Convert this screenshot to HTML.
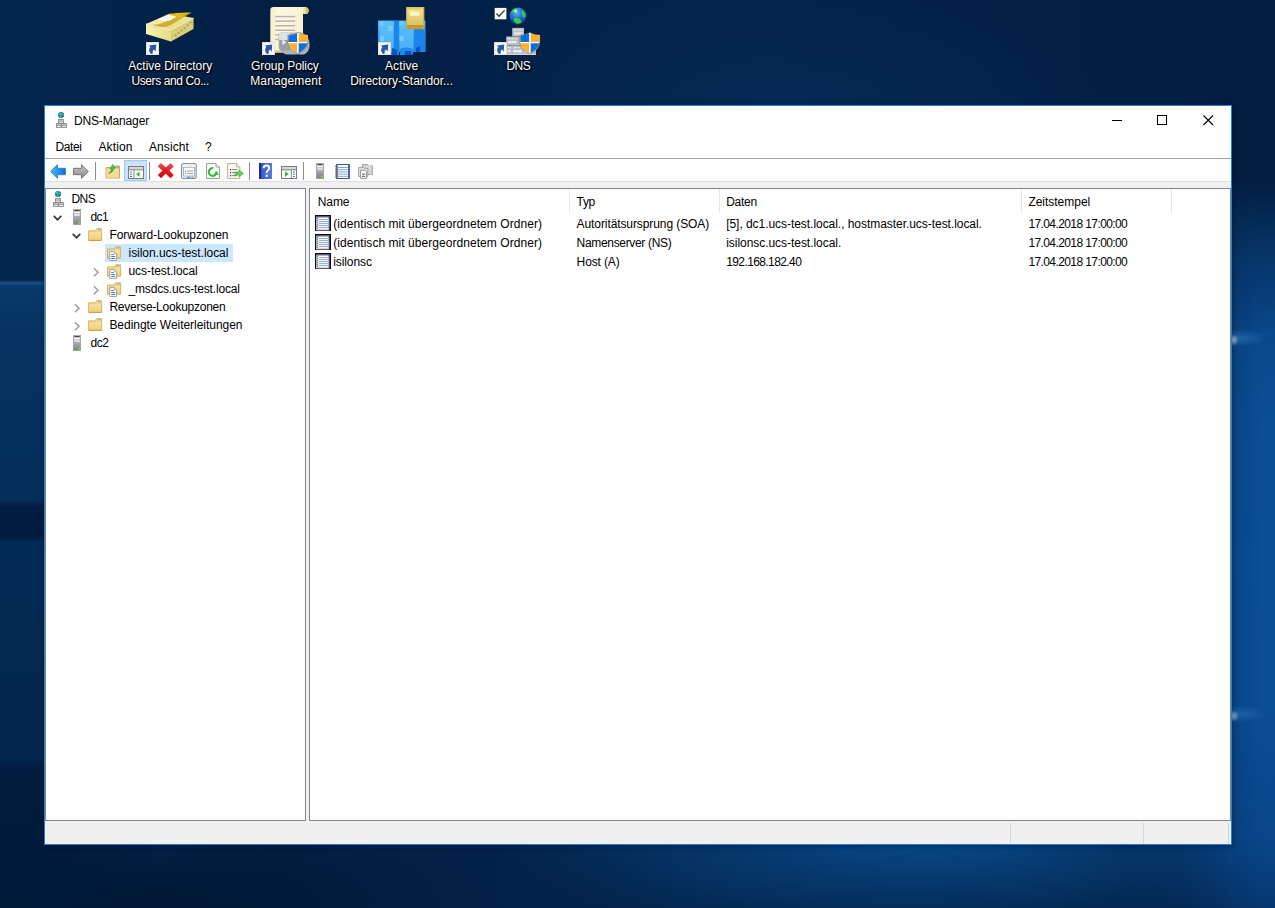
<!DOCTYPE html>
<html><head><meta charset="utf-8"><title>DNS-Manager</title>
<style>
html,body{margin:0;padding:0}
body{width:1275px;height:908px;overflow:hidden;position:relative;font-family:"Liberation Sans", sans-serif;font-size:12px;background:#021a3c}
.t{position:absolute;white-space:pre;line-height:14px;height:14px}
.i{position:absolute;line-height:0}
.i svg{display:block;overflow:visible}
.abs{position:absolute}
.dt{position:absolute;white-space:pre;line-height:14px;height:14px;color:#fff;font-size:12px;text-shadow:0 1px 2px rgba(0,0,0,.9),1px 1px 1px rgba(0,0,0,.8),0 0 3px rgba(0,0,0,.6)}
#bg{position:absolute;left:0;top:0;width:1275px;height:908px;
 background:
  radial-gradient(ellipse 440px 105px at 930px 838px, rgba(9,76,142,.95) 0%, rgba(9,76,142,.5) 45%, rgba(9,76,142,0) 100%),
  radial-gradient(ellipse 300px 120px at 800px 110px, rgba(6,48,96,.55), rgba(6,48,96,0) 100%),
  radial-gradient(ellipse 380px 90px at 120px 908px, rgba(1,20,48,.8), rgba(1,20,48,0) 100%),
  linear-gradient(90deg,#03264e 0%,#021f43 22%,#03234a 55%,#021d40 100%)}
#rs{position:absolute;left:1120px;top:0;width:155px;height:908px;
 background:
  radial-gradient(circle 6px at 113px 340px, rgba(200,230,255,.95), rgba(160,210,255,0) 100%),
  radial-gradient(ellipse 30px 9px at 116px 338px, rgba(70,150,235,.45), rgba(70,150,235,0) 100%),
  radial-gradient(circle 6px at 113px 716px, rgba(190,225,255,.85), rgba(160,210,255,0) 100%),
  radial-gradient(ellipse 30px 9px at 116px 714px, rgba(70,150,235,.4), rgba(70,150,235,0) 100%),
  linear-gradient(180deg, rgba(4,36,78,0) 0px, rgba(4,38,80,.0) 180px, #06305f 235px, #083d78 290px, #0a4a8c 340px, #0a4e93 420px, #0a4f98 560px, #0a4e96 700px, #0a4a90 770px, #094486 850px, #07376f 908px);
 -webkit-mask-image:linear-gradient(90deg, rgba(0,0,0,0) 0%, rgba(0,0,0,.3) 40%, rgba(0,0,0,.8) 72%, #000 90%);
 mask-image:linear-gradient(90deg, rgba(0,0,0,0) 0%, rgba(0,0,0,.3) 40%, rgba(0,0,0,.8) 72%, #000 90%)}
#ls{position:absolute;left:0;top:0;width:150px;height:908px;
 background:linear-gradient(180deg, rgba(3,37,76,0) 0px, rgba(3,37,76,0) 240px, #03254c 270px, #03264e 280px, #1d5288 283px, #07396a 286px, #053361 330px, #04305c 440px, #042e5a 500px, #021d42 507px, #021c40 536px, #032b57 543px, #032950 650px, #02244b 760px, #011c3e 770px, #011a3a 908px);
 -webkit-mask-image:linear-gradient(90deg,#000 0px,#000 44px,rgba(0,0,0,0) 150px);mask-image:linear-gradient(90deg,#000 0px,#000 44px,rgba(0,0,0,0) 150px)}
#win{position:absolute;left:44px;top:105px;width:1186px;height:738px;border:1px solid #1883d7;background:#fff;box-shadow:0 1px 5px rgba(0,8,24,.45)}
</style></head><body>
<div id="bg"></div><div id="rs"></div><div id="ls"></div>

<div class="i" style="left:146px;top:7px"><svg width="48" height="48" viewBox="0 0 48 48">
<defs><linearGradient id="da1" x1="0" y1="0" x2="1" y2="0"><stop offset="0" stop-color="#f7f1b4"/><stop offset="1" stop-color="#e7dc88"/></linearGradient>
<linearGradient id="da2" x1="0" y1="0" x2="1" y2="1"><stop offset="0" stop-color="#fdfae0"/><stop offset="0.5" stop-color="#f0e592"/><stop offset="1" stop-color="#e0d27a"/></linearGradient></defs>
<path d="M0 17L25 23V34.5L0 27Z" fill="url(#da1)"/>
<path d="M25 23L47.5 11V22L25 34.5Z" fill="#d9cd78"/>
<path d="M0 17L24 6.5L47.5 11L25 23Z" fill="url(#da2)"/>
<path d="M3 17.5Q14 19 22 13Q30 7 45 6Q36 11 30 15Q22 21 10 20.5Z" fill="#c8a826" opacity="0.9"/>
<path d="M12 12.5L22 7.5Q28 8 32 6.5L41 6.2Q30 9 24 13.5Q18 15.5 12 12.5Z" fill="#fffdf0"/>
<path d="M21 7.5Q32 5 46 5.6Q37 8 33 11Q28 8 21 7.5Z" fill="#e9b818"/>
<path d="M0 17L25 23L47.5 11" fill="none" stroke="#fbf7cc" stroke-width="1"/>
<g fill="#a39a58"><circle cx="29.5" cy="28.3" r="1"/><circle cx="32.5" cy="26" r="1"/><circle cx="35.5" cy="23.6" r="1"/><circle cx="38.5" cy="21" r="1"/><circle cx="41.5" cy="18.2" r="1"/><circle cx="44.5" cy="15.4" r="1"/></g>
<g transform="translate(0,35)"><rect x="0" y="0" width="13" height="13" fill="#f7f7f7"/><rect x="0.3" y="0.3" width="12.4" height="12.4" fill="none" stroke="#d0d0d0" stroke-width="0.6"/>
<path d="M5 12Q1.6 8.4 4.3 5.2L3 3.5L10.2 2.4L9.7 9.4L7.9 7.5Q6 8.8 6.8 11.4Z" fill="#2a58a4"/></g></svg></div>
<div class="i" style="left:262px;top:7px"><svg width="48" height="48" viewBox="0 0 48 48">
<defs><linearGradient id="dg1" x1="0" y1="0" x2="1" y2="0"><stop offset="0" stop-color="#f7ecc4"/><stop offset="0.2" stop-color="#fdf7de"/><stop offset="1" stop-color="#f9f0d0"/></linearGradient></defs>
<path d="M8.3 3Q8.3 0 11.5 0H43Q46.6 0 46.6 3.5Q46.6 7 43.5 7H41V45.5H11.5Q8.3 45.5 8.3 42Z" fill="url(#dg1)"/>
<path d="M41 7H43.5Q46.6 7 46.6 3.5Q46.6 0.4 43.6 0.2Q41 1.6 41 7Z" fill="#d9c06a"/>
<path d="M41 7V3.5Q41 1 43.2 0.8Q44.6 2.6 43.5 7Z" fill="#efe0a0"/>
<g fill="#bdb0b4"><rect x="13.2" y="8.8" width="20" height="1.5"/><rect x="13.2" y="13.4" width="20" height="1.5"/><rect x="13.2" y="18" width="20" height="1.5"/><rect x="13.2" y="22.5" width="20" height="1.5"/><rect x="13.2" y="27.1" width="6" height="1.5"/><rect x="13.2" y="31.7" width="4" height="1.5"/></g>
<path d="M10 45.5H41V43.5H10Q9 44.6 10 45.5Z" fill="#e3c768"/>
<path d="M16.5 27.5Q16.5 25.5 19 25.5H40Q47.6 29 47.6 38Q47.6 45 42 47.5H24Q16.5 44 16.5 40Z" fill="#aeb4b8"/>
<path d="M17 27.5Q17 26 19 26H28V33H17Z" fill="#dde2e6"/><path d="M17.5 33H28V43.5H20Q17.5 42 17.5 40Z" fill="#9aa1a6"/>
<path d="M20.5 32.5L24 35.2L20.5 38Z" fill="#eef0f2"/>
<g transform="translate(25.6,25.2)"><path d="M10.3 0.3Q14.3 2.8 20.3 2.8V9.6Q20.3 17.4 10.3 21.3Q0.3 17.4 0.3 9.6V2.8Q6.3 2.8 10.3 0.3Z" fill="#fff" stroke="#5e4a2c" stroke-width="0.5"/>
<path d="M9.5 0.95Q6.3 3 0.75 3.2V9.7H9.5Z" fill="#0f6fd6"/><path d="M11.1 0.95Q14.3 3 19.85 3.2V9.7H11.1Z" fill="#f9b02c"/>
<path d="M0.75 11.1H9.5V20.5Q1.7 17 0.75 11.1Z" fill="#f9b02c"/><path d="M19.85 11.1H11.1V20.5Q18.9 17 19.85 11.1Z" fill="#0f6fd6"/></g><g transform="translate(0,35)"><rect x="0" y="0" width="13" height="13" fill="#f7f7f7"/><rect x="0.3" y="0.3" width="12.4" height="12.4" fill="none" stroke="#d0d0d0" stroke-width="0.6"/>
<path d="M5 12Q1.6 8.4 4.3 5.2L3 3.5L10.2 2.4L9.7 9.4L7.9 7.5Q6 8.8 6.8 11.4Z" fill="#2a58a4"/></g></svg></div>
<div class="i" style="left:378px;top:7px"><svg width="48" height="48" viewBox="0 0 48 48">
<defs><linearGradient id="ds1" x1="0" y1="0" x2="0" y2="1"><stop offset="0" stop-color="#45b4f6"/><stop offset="0.6" stop-color="#2a9cf0"/><stop offset="1" stop-color="#1486ea"/></linearGradient>
<linearGradient id="ds2" x1="0" y1="0" x2="0" y2="1"><stop offset="0" stop-color="#d9bd56"/><stop offset="0.15" stop-color="#f1df92"/><stop offset="0.8" stop-color="#dcc15c"/><stop offset="0.82" stop-color="#b7962a"/><stop offset="1" stop-color="#c5a232"/></linearGradient></defs>
<rect x="0" y="13.5" width="18.6" height="34.5" fill="url(#ds1)"/><rect x="20.2" y="13.5" width="27.2" height="31.5" fill="url(#ds1)"/>
<rect x="16" y="13.5" width="5" height="34.5" fill="#1886ea"/>
<rect x="36" y="22" width="11.4" height="23" fill="#1a84ea"/>
<g fill="#9fe2ff" opacity="0.75"><rect x="1.5" y="14.5" width="4" height="4"/><rect x="21.5" y="14.5" width="4" height="4"/><rect x="2" y="29" width="4" height="5"/><rect x="21.5" y="29" width="4" height="5"/><rect x="10" y="19" width="5" height="5"/></g>
<g fill="#6cc8fb" opacity="0.6"><rect x="1.5" y="14.5" width="14" height="30"/><rect x="21.5" y="14.5" width="14" height="30"/></g>
<path d="M22 48V42Q28 39 35 42V48Z" fill="#1d8cf0"/><path d="M14 48V41L19 43V48Z" fill="#0b50c8"/><path d="M27 48V44H33V46L35 48Z" fill="#0b50c8"/><path d="M38 45V41L42 39V45Z" fill="#0b50c8"/>
<rect x="28.2" y="0" width="18" height="22.2" fill="url(#ds2)"/><rect x="28.2" y="0" width="1" height="22.2" fill="#c9ac46"/><rect x="45.2" y="0" width="1" height="22.2" fill="#c9ac46"/>
<rect x="32" y="4.6" width="9.4" height="4.2" fill="#fdf6c8"/>
<g transform="translate(0,35)"><rect x="0" y="0" width="13" height="13" fill="#f7f7f7"/><rect x="0.3" y="0.3" width="12.4" height="12.4" fill="none" stroke="#d0d0d0" stroke-width="0.6"/>
<path d="M5 12Q1.6 8.4 4.3 5.2L3 3.5L10.2 2.4L9.7 9.4L7.9 7.5Q6 8.8 6.8 11.4Z" fill="#2a58a4"/></g></svg></div>
<div class="i" style="left:494px;top:7px"><svg width="48" height="48" viewBox="0 0 48 48">
<rect x="0.7" y="0.9" width="11.7" height="11.4" fill="#fff"/><path d="M2.4 6.6L5 9.2L10.6 3.4" fill="none" stroke="#333" stroke-width="1.3"/>
<defs><radialGradient id="dd1" cx="0.42" cy="0.3" r="0.75"><stop offset="0" stop-color="#5ab4ff"/><stop offset="0.45" stop-color="#2a6fe0"/><stop offset="1" stop-color="#0a2f9c"/></radialGradient></defs>
<circle cx="24" cy="8.9" r="8.5" fill="url(#dd1)"/>
<path d="M16.8 6Q18 2 22.5 1.6Q24.5 3 22.5 5Q20 6.4 16.8 6ZM28 3.2Q30.6 4.2 31.6 7Q31.8 10 30 11Q28 9.6 28 7ZM19.6 11.6Q22 10 25 11.6Q28 13.6 27.4 15.6Q24.6 17.6 21.6 16Q19.4 14 19.6 11.6Z" fill="#2fd433"/>
<circle cx="21.6" cy="3.8" r="1.6" fill="#d8ffd0" opacity="0.8"/>
<g fill="#b9bcc0"><rect x="18.2" y="20.9" width="11.8" height="8.6"/><rect x="12.2" y="29.5" width="24" height="9"/><rect x="12.2" y="38.5" width="29.8" height="9.5"/></g>
<rect x="0" y="47" width="42" height="1" fill="#d9d9d9"/>
<g fill="#e9ebed"><rect x="19.5" y="22.4" width="3" height="1.3"/><rect x="23.5" y="22.4" width="2" height="1.3"/><rect x="26.5" y="22.4" width="2" height="1.3"/><rect x="20" y="25.4" width="8.6" height="2.2"/>
<rect x="13.6" y="31" width="3" height="1.3"/><rect x="17.6" y="31" width="2" height="1.3"/><rect x="20.6" y="31" width="2" height="1.3"/><rect x="14" y="34" width="8.6" height="2.2"/>
<rect x="13.6" y="40" width="3" height="1.3"/><rect x="19.6" y="40" width="3" height="1.3"/><rect x="23.6" y="40" width="2" height="1.3"/><rect x="13.6" y="43" width="3" height="2.4"/><rect x="19" y="43" width="9" height="2.4"/><rect x="31" y="43" width="5" height="2.4"/></g>
<g transform="translate(25.6,25.2)"><path d="M10.3 0.3Q14.3 2.8 20.3 2.8V9.6Q20.3 17.4 10.3 21.3Q0.3 17.4 0.3 9.6V2.8Q6.3 2.8 10.3 0.3Z" fill="#fff" stroke="#5e4a2c" stroke-width="0.5"/>
<path d="M9.5 0.95Q6.3 3 0.75 3.2V9.7H9.5Z" fill="#0f6fd6"/><path d="M11.1 0.95Q14.3 3 19.85 3.2V9.7H11.1Z" fill="#f9b02c"/>
<path d="M0.75 11.1H9.5V20.5Q1.7 17 0.75 11.1Z" fill="#f9b02c"/><path d="M19.85 11.1H11.1V20.5Q18.9 17 19.85 11.1Z" fill="#0f6fd6"/></g><g transform="translate(0,35)"><rect x="0" y="0" width="13" height="13" fill="#f7f7f7"/><rect x="0.3" y="0.3" width="12.4" height="12.4" fill="none" stroke="#d0d0d0" stroke-width="0.6"/>
<path d="M5 12Q1.6 8.4 4.3 5.2L3 3.5L10.2 2.4L9.7 9.4L7.9 7.5Q6 8.8 6.8 11.4Z" fill="#2a58a4"/></g></svg></div>
<span class="dt" style="left:128.3px;top:59px;letter-spacing:-0.002px">Active Directory</span>
<span class="dt" style="left:131.4px;top:74px;letter-spacing:-0.385px">Users and Co...</span>
<span class="dt" style="left:251px;top:59px;letter-spacing:-0.075px">Group Policy</span>
<span class="dt" style="left:250.2px;top:74px;letter-spacing:0.135px">Management</span>
<span class="dt" style="left:385px;top:59px;letter-spacing:0.119px">Active</span>
<span class="dt" style="left:350.2px;top:74px;letter-spacing:-0.029px">Directory-Standor...</span>
<span class="dt" style="left:506.5px;top:59px;letter-spacing:-0.600px">DNS</span>
<div id="win"></div>
<div class="abs" style="left:45px;top:158px;width:1186px;height:1px;background:#a0a0a0"></div>
<div class="abs" style="left:45px;top:181px;width:1186px;height:7px;background:#f0f0f0"></div>
<div class="abs" style="left:45px;top:181px;width:1186px;height:1px;background:#dfdfdf"></div>
<div class="abs" style="left:45px;top:188px;width:259px;height:631px;border:1px solid #828790;background:#fff"></div>
<div class="abs" style="left:306px;top:188px;width:3px;height:633px;background:#f0f0f0"></div>
<div class="abs" style="left:309px;top:188px;width:920px;height:631px;border:1px solid #828790;background:#fff"></div>
<div class="abs" style="left:45px;top:821px;width:1186px;height:23px;background:#f0f0f0"></div>
<div class="abs" style="left:1010px;top:823px;width:1px;height:21px;background:#d7d7d7"></div>
<div class="abs" style="left:1143px;top:823px;width:1px;height:21px;background:#d7d7d7"></div>
<div class="abs" style="left:1228px;top:823px;width:1px;height:21px;background:#d7d7d7"></div>
<div class="i" style="left:56px;top:112px"><svg width="11" height="16" viewBox="0 0 11 16">
<defs><radialGradient id="gg" cx="0.4" cy="0.35" r="0.75"><stop offset="0" stop-color="#4fa8ff"/><stop offset="0.5" stop-color="#2a62dc"/><stop offset="1" stop-color="#0c2c96"/></radialGradient></defs>
<circle cx="5" cy="3" r="3.05" fill="url(#gg)"/>
<path d="M2.2 2.4Q2.8 0.6 4.6 0.6Q5 2 3.8 3ZM6 1.4Q7.6 1.6 7.9 3.2Q7.2 4.4 6 3.4ZM3.4 4.2Q4.8 3.4 5.9 4.5Q5.6 6 4.4 6Q3.4 5.4 3.4 4.2Z" fill="#22e02a"/>
<rect x="2" y="7" width="5.9" height="4.4" fill="#909090"/><rect x="0" y="11" width="10.9" height="4.9" fill="#909090"/>
<g fill="#d4d4d4"><rect x="3" y="8" width="1.6" height="0.9"/><rect x="5.2" y="8" width="1.7" height="0.9"/><rect x="1" y="12.1" width="1.6" height="0.9"/><rect x="3.2" y="12.1" width="1.6" height="0.9"/><rect x="6.1" y="12.1" width="1.6" height="0.9"/><rect x="8.3" y="12.1" width="1.6" height="0.9"/></g>
<g fill="#fff"><rect x="3" y="9.6" width="3.9" height="1"/><rect x="1" y="13.8" width="3.8" height="1"/><rect x="6.1" y="13.8" width="3.8" height="1"/></g>
</svg></div>
<span class="t " style="left:74px;top:114.03px;font-size:12px;letter-spacing:-0.155px;color:#000;">DNS-Manager</span>
<div class="abs" style="left:1112px;top:120px;width:10px;height:1px;background:#000"></div>
<div class="abs" style="left:1157px;top:115px;width:8px;height:8px;border:1px solid #000"></div>
<div class="i" style="left:1203px;top:115px"><svg width="11" height="11" viewBox="0 0 11 11"><path d="M0.5 0.5L10 10M10 0.5L0.5 10" stroke="#000" stroke-width="1.1" fill="none"/></svg></div>
<span class="t " style="left:55.5px;top:140.03px;font-size:12px;letter-spacing:-0.423px;color:#000;">Datei</span>
<span class="t " style="left:98.4px;top:140.03px;font-size:12px;letter-spacing:0.157px;color:#000;">Aktion</span>
<span class="t " style="left:149px;top:140.03px;font-size:12px;letter-spacing:0.092px;color:#000;">Ansicht</span>
<span class="t " style="left:205px;top:140.03px;font-size:12px;letter-spacing:-0.600px;color:#000;">?</span>
<div class="abs" style="left:124px;top:160px;width:21px;height:19px;border:1px solid #98cdf5;background:#cce4f7"></div>
<div class="abs" style="left:95px;top:162px;width:1px;height:18px;background:#8d8d8d"></div>
<div class="abs" style="left:149px;top:162px;width:1px;height:18px;background:#8d8d8d"></div>
<div class="abs" style="left:249px;top:162px;width:1px;height:18px;background:#8d8d8d"></div>
<div class="abs" style="left:303px;top:162px;width:1px;height:18px;background:#8d8d8d"></div>
<div class="i" style="left:50px;top:164px"><svg width="16" height="15" viewBox="0 0 16 15">
<defs><linearGradient id="gb" x1="0" y1="0" x2="1" y2="0"><stop offset="0" stop-color="#55b8f7"/><stop offset="1" stop-color="#0a6fd2"/></linearGradient></defs>
<path d="M0.6 7.5L7.5 0.7V4.3H15.4V10.7H7.5V14.3Z" fill="url(#gb)" stroke="#2a7fd0" stroke-width="0.9" stroke-linejoin="round"/></svg></div>
<div class="i" style="left:73px;top:164px"><svg width="16" height="15" viewBox="0 0 16 15">
<defs><linearGradient id="gf" x1="0" y1="0" x2="0" y2="1"><stop offset="0" stop-color="#c9c9c9"/><stop offset="1" stop-color="#8a8a8a"/></linearGradient></defs>
<path d="M15.4 7.5L8.5 0.7V4.3H0.6V10.7H8.5V14.3Z" fill="url(#gf)" stroke="#6b6b6b" stroke-width="0.9" stroke-linejoin="round"/></svg></div>
<div class="i" style="left:104.6px;top:163.4px"><svg width="16" height="16" viewBox="0 0 16 16">
<path d="M1 4.5H8L9.5 3H14.5V15H1Z" fill="#efcf7c" stroke="#c9a24a" stroke-width="0.9"/>
<rect x="1.5" y="6" width="12.5" height="8.5" fill="#f6dc98"/>
<path d="M3.5 10.5Q5.5 9.5 6.5 6.5L5 6L7.5 1.5L10.5 5L8.8 5.4Q8 10 3.5 10.5Z" fill="#3fbf3f" stroke="#2c9a2c" stroke-width="0.5"/>
<rect x="10.5" y="3.6" width="3" height="1" fill="#6a9fe0"/></svg></div>
<div class="i" style="left:128px;top:164px"><svg width="16" height="16" viewBox="0 0 16 16">
<rect x="0.5" y="2.5" width="15" height="12" fill="#fff" stroke="#7a7a7a"/>
<rect x="1" y="3" width="14" height="2.2" fill="#d9d9d9"/><rect x="0.5" y="5.3" width="15" height="1" fill="#7a7a7a"/>
<rect x="5.5" y="6" width="1" height="8.5" fill="#8a8a8a"/>
<rect x="2" y="7.6" width="2" height="1" fill="#3b78d8"/><rect x="2" y="9.8" width="2" height="1" fill="#3b78d8"/><rect x="2" y="12" width="2" height="1" fill="#3b78d8"/>
<path d="M11.5 7.5V13L8 10.2Z" fill="#3fb83f"/></svg></div>
<div class="i" style="left:157.5px;top:163px"><svg width="16" height="16" viewBox="0 0 16 16">
<defs><linearGradient id="gd" x1="0" y1="0" x2="0" y2="1"><stop offset="0" stop-color="#f0545a"/><stop offset="0.5" stop-color="#e81820"/><stop offset="1" stop-color="#c80f16"/></linearGradient></defs>
<path d="M3 0.4L7.8 4.8L12.6 0.4L15.5 3.3L11 7.6L15.5 12L12.6 14.9L7.8 10.5L3 14.9L0.1 12L4.6 7.6L0.1 3.3Z" fill="url(#gd)" stroke="#c4141c" stroke-width="0.5" stroke-linejoin="round"/></svg></div>
<div class="i" style="left:181px;top:163px"><svg width="16" height="16" viewBox="0 0 16 16">
<rect x="0.6" y="0.6" width="14.6" height="14.8" rx="1.2" fill="#f4f6f8" stroke="#7d8590"/>
<rect x="2.5" y="4.5" width="11" height="8.5" fill="#fff" stroke="#9aa3ad" stroke-width="0.8"/>
<rect x="5" y="3.5" width="3" height="1.5" fill="#c9ced4"/><rect x="9" y="3.5" width="3" height="1.5" fill="#c9ced4"/>
<rect x="4" y="7.5" width="1.2" height="1.2" fill="#2fa4f0"/><rect x="6.2" y="7.6" width="6" height="1" fill="#8f98a3"/>
<rect x="4" y="10" width="1.2" height="1.2" fill="#8f98a3"/><rect x="6.2" y="10.1" width="6" height="1" fill="#8f98a3"/>
<rect x="6" y="13.6" width="3.4" height="1.3" fill="#18b4f0"/><rect x="10.3" y="13.6" width="3.2" height="1.3" fill="#a9b0b8"/></svg></div>
<div class="i" style="left:205px;top:163px"><svg width="16" height="16" viewBox="0 0 16 16">
<path d="M1.6 0.6H11L14.4 4V15.4H1.6Z" fill="#fff" stroke="#8a8a8a" stroke-width="0.9"/><path d="M11 0.6V4H14.4" fill="#eee" stroke="#8a8a8a" stroke-width="0.8"/>
<path d="M11.6 9.2A3.9 3.9 0 1 1 8.4 5.1" fill="none" stroke="#3cb63c" stroke-width="2.1"/>
<path d="M8.8 11.8L13.6 11.9L11.3 7.4Z" fill="#3cb63c"/></svg></div>
<div class="i" style="left:226.8px;top:163px"><svg width="17" height="16" viewBox="0 0 17 16">
<path d="M0.6 0.6H9.5L12.9 4V15.4H0.6Z" fill="#fdf8e4" stroke="#a8a8a8" stroke-width="0.9"/><path d="M9.5 0.6V4H12.9" fill="#eee" stroke="#a8a8a8" stroke-width="0.8"/>
<rect x="3" y="6" width="1.2" height="1.2" fill="#333"/><rect x="5.2" y="6.1" width="5" height="1" fill="#6a74c8"/>
<rect x="3" y="9" width="1.2" height="1.2" fill="#333"/><rect x="5.2" y="9.1" width="4" height="1" fill="#6a74c8"/>
<rect x="3" y="12" width="1.2" height="1.2" fill="#333"/><rect x="5.2" y="12.1" width="5" height="1" fill="#6a74c8"/>
<path d="M8.2 9H12V7L16.4 10.4L12 13.8V11.8H8.2Z" fill="#5fcf4a" stroke="#38a828" stroke-width="0.6"/></svg></div>
<div class="i" style="left:259px;top:163px"><svg width="13" height="16" viewBox="0 0 13 16">
<defs><linearGradient id="gh" x1="0" y1="0" x2="1" y2="0"><stop offset="0" stop-color="#1f3fa8"/><stop offset="0.25" stop-color="#3b62d8"/><stop offset="1" stop-color="#5578e0"/></linearGradient></defs>
<rect x="0" y="0" width="13" height="16" fill="url(#gh)"/><rect x="0" y="0" width="2.2" height="16" fill="#182f86"/>
<path d="M4.6 5.2Q4.6 2.4 7.4 2.4Q10.2 2.4 10.2 4.9Q10.2 6.4 8.8 7.5Q7.7 8.4 7.7 10" fill="none" stroke="#fff" stroke-width="2"/><rect x="6.6" y="11.6" width="2.2" height="2.2" fill="#fff"/></svg></div>
<div class="i" style="left:281px;top:163px"><svg width="16" height="16" viewBox="0 0 16 16">
<rect x="0.5" y="3.5" width="15" height="12" fill="#fff" stroke="#7a7a7a"/>
<rect x="1" y="4" width="14" height="2.2" fill="#d9d9d9"/><rect x="0.5" y="6.3" width="15" height="1" fill="#7a7a7a"/>
<rect x="9.8" y="7" width="1" height="8.5" fill="#8a8a8a"/>
<rect x="12" y="8.6" width="2" height="1" fill="#3b78d8"/><rect x="12" y="10.8" width="2" height="1" fill="#3b78d8"/><rect x="12" y="13" width="2" height="1" fill="#3b78d8"/>
<path d="M4 8.3V14L7.8 11.1Z" fill="#3fb83f"/></svg></div>
<div class="i" style="left:316px;top:163px"><svg width="8" height="16" viewBox="0 0 8 16">
<defs><linearGradient id="gs" x1="0" y1="0" x2="0" y2="1"><stop offset="0" stop-color="#c6cace"/><stop offset="0.45" stop-color="#a9aeb3"/><stop offset="1" stop-color="#7a8086"/></linearGradient></defs>
<rect x="0.3" y="0.3" width="7.4" height="15.3" fill="url(#gs)" stroke="#8e9399" stroke-width="0.6"/>
<rect x="1.4" y="1.1" width="5.2" height="1" fill="#33373c"/><rect x="1.1" y="2.7" width="5.8" height="1.6" fill="#f6f7f8"/><rect x="1.1" y="5.2" width="5.8" height="1.6" fill="#e6e8ea"/>
<rect x="5.2" y="12.8" width="1.9" height="1.9" fill="#86e21e"/></svg></div>
<div class="i" style="left:335.4px;top:164px"><svg width="15" height="15" viewBox="0 0 15 15">
<rect x="1.8" y="0.5" width="12.4" height="14" fill="#fff" stroke="#3f4f9a" stroke-width="1"/>
<rect x="13" y="1" width="1.6" height="13" fill="#4458a8"/>
<g fill="#79a9dc"><rect x="3" y="3" width="9.6" height="1"/><rect x="3" y="5.2" width="9.6" height="1"/><rect x="3" y="7.4" width="9.6" height="1"/><rect x="3" y="9.6" width="9.6" height="1"/><rect x="3" y="11.8" width="9.6" height="1"/></g>
<g fill="none" stroke="#5a5a5a" stroke-width="0.8"><circle cx="1.6" cy="2.2" r="1"/><circle cx="1.6" cy="4.4" r="1"/><circle cx="1.6" cy="6.6" r="1"/><circle cx="1.6" cy="8.8" r="1"/><circle cx="1.6" cy="11" r="1"/><circle cx="1.6" cy="13.2" r="1"/></g></svg></div>
<div class="i" style="left:358px;top:164px"><svg width="15" height="15" viewBox="0 0 15 15">
<path d="M4.5 0.6H10L11 1.6H14.4V10.5H4.5Z" fill="#d7d7d7" stroke="#9b9b9b" stroke-width="0.9"/><rect x="11" y="1.2" width="2.4" height="0.9" fill="#f3f3f3"/>
<path d="M0.6 3.4H5.6L6.6 4.4H9.8V12.5H0.6Z" fill="#e4e4e4" stroke="#9b9b9b" stroke-width="0.9"/>
<path d="M2.6 6.2H6.8L8.6 8V14.4H2.6Z" fill="#fff" stroke="#8a8a8a" stroke-width="0.9"/>
<rect x="4" y="9.6" width="3.2" height="1" fill="#555"/><rect x="4" y="11.8" width="3.2" height="1" fill="#555"/></svg></div>
<div class="abs" style="left:105px;top:244px;width:128px;height:18px;background:#cce8ff"></div>
<div class="i" style="left:53px;top:191px"><svg width="11" height="16" viewBox="0 0 11 16">
<circle cx="5" cy="3" r="3.05" fill="url(#gg)"/>
<path d="M2.2 2.4Q2.8 0.6 4.6 0.6Q5 2 3.8 3ZM6 1.4Q7.6 1.6 7.9 3.2Q7.2 4.4 6 3.4ZM3.4 4.2Q4.8 3.4 5.9 4.5Q5.6 6 4.4 6Q3.4 5.4 3.4 4.2Z" fill="#22e02a"/>
<rect x="2" y="7" width="5.9" height="4.4" fill="#909090"/><rect x="0" y="11" width="10.9" height="4.9" fill="#909090"/>
<g fill="#d4d4d4"><rect x="3" y="8" width="1.6" height="0.9"/><rect x="5.2" y="8" width="1.7" height="0.9"/><rect x="1" y="12.1" width="1.6" height="0.9"/><rect x="3.2" y="12.1" width="1.6" height="0.9"/><rect x="6.1" y="12.1" width="1.6" height="0.9"/><rect x="8.3" y="12.1" width="1.6" height="0.9"/></g>
<g fill="#fff"><rect x="3" y="9.6" width="3.9" height="1"/><rect x="1" y="13.8" width="3.8" height="1"/><rect x="6.1" y="13.8" width="3.8" height="1"/></g>
</svg></div>
<span class="t " style="left:71.5px;top:192.03px;font-size:12px;letter-spacing:-0.600px;color:#000;">DNS</span>
<div class="i" style="left:53px;top:214.7px"><svg width="9" height="6" viewBox="0 0 9 6"><path d="M0.7 0.8L4.5 4.7L8.3 0.8" stroke="#3c3c3c" stroke-width="1.7" fill="none"/></svg></div>
<div class="i" style="left:73px;top:209px"><svg width="8" height="16" viewBox="0 0 8 16">
<rect x="0.3" y="0.3" width="7.4" height="15.3" fill="url(#gs)" stroke="#8e9399" stroke-width="0.6"/>
<rect x="1.4" y="1.1" width="5.2" height="1" fill="#33373c"/><rect x="1.1" y="2.7" width="5.8" height="1.6" fill="#f6f7f8"/><rect x="1.1" y="5.2" width="5.8" height="1.6" fill="#e6e8ea"/>
<rect x="5.2" y="12.8" width="1.9" height="1.9" fill="#86e21e"/></svg></div>
<span class="t " style="left:90.5px;top:210.03px;font-size:12px;letter-spacing:-0.600px;color:#000;">dc1</span>
<div class="i" style="left:72px;top:232.7px"><svg width="9" height="6" viewBox="0 0 9 6"><path d="M0.7 0.8L4.5 4.7L8.3 0.8" stroke="#3c3c3c" stroke-width="1.7" fill="none"/></svg></div>
<div class="i" style="left:88px;top:228px"><svg width="15" height="13" viewBox="0 0 15 13">
<defs><linearGradient id="gfo" x1="0" y1="0" x2="0" y2="1"><stop offset="0" stop-color="#fbe7ac"/><stop offset="1" stop-color="#f1cf79"/></linearGradient></defs>
<path d="M0.5 2.8H7.2L8.6 0.6H13.6V12.4H0.5Z" fill="url(#gfo)" stroke="#d9b45c" stroke-width="0.9" stroke-linejoin="round"/>
<path d="M0.9 3.7H7.6L8.8 2.9H13.2" fill="none" stroke="#e3c06a" stroke-width="0.7"/><rect x="9.6" y="1.2" width="3" height="1" fill="#6fa6e6"/><path d="M0.9 12.4H13.6" stroke="#c39a40" stroke-width="0.9"/></svg></div>
<span class="t " style="left:109.4px;top:228.03px;font-size:12px;letter-spacing:-0.057px;color:#000;">Forward-Lookupzonen</span>
<div class="i" style="left:107px;top:246px"><svg width="15" height="15" viewBox="0 0 15 15">
<defs><linearGradient id="gz" x1="0" y1="0" x2="0" y2="1"><stop offset="0" stop-color="#fbe7ac"/><stop offset="1" stop-color="#f1cf79"/></linearGradient></defs>
<path d="M0.5 3H7.2L8.6 0.8H13.6V12.2H0.5Z" fill="url(#gz)" stroke="#d3ac52" stroke-width="0.9" stroke-linejoin="round"/>
<path d="M0.9 3.9H7.6L8.8 3.1H13.2" fill="none" stroke="#e3c06a" stroke-width="0.7"/><rect x="9.6" y="1.4" width="3" height="1" fill="#6fa6e6"/>
<path d="M2.8 5.6H7.4L9.6 7.8V14.5H2.8Z" fill="#fff" stroke="#9a9a9a" stroke-width="0.9"/><path d="M7.4 5.6V7.8H9.6" fill="#e6e6e6" stroke="#9a9a9a" stroke-width="0.7"/>
<rect x="4.2" y="8" width="2.6" height="1" fill="#3f7fd6"/><rect x="4.2" y="10" width="4" height="1" fill="#3f7fd6"/><rect x="4.2" y="12" width="4" height="1" fill="#3f7fd6"/></svg></div>
<span class="t " style="left:128.5px;top:246.03px;font-size:12px;letter-spacing:-0.039px;color:#000;">isilon.ucs-test.local</span>
<div class="i" style="left:93px;top:267px"><svg width="6" height="10" viewBox="0 0 6 10"><path d="M0.9 1.2L5 5.2L0.9 9.2" stroke="#a0a0a0" stroke-width="1.6" fill="none"/></svg></div>
<div class="i" style="left:107px;top:264px"><svg width="15" height="15" viewBox="0 0 15 15">
<path d="M0.5 3H7.2L8.6 0.8H13.6V12.2H0.5Z" fill="url(#gz)" stroke="#d3ac52" stroke-width="0.9" stroke-linejoin="round"/>
<path d="M0.9 3.9H7.6L8.8 3.1H13.2" fill="none" stroke="#e3c06a" stroke-width="0.7"/><rect x="9.6" y="1.4" width="3" height="1" fill="#6fa6e6"/>
<path d="M2.8 5.6H7.4L9.6 7.8V14.5H2.8Z" fill="#fff" stroke="#9a9a9a" stroke-width="0.9"/><path d="M7.4 5.6V7.8H9.6" fill="#e6e6e6" stroke="#9a9a9a" stroke-width="0.7"/>
<rect x="4.2" y="8" width="2.6" height="1" fill="#3f7fd6"/><rect x="4.2" y="10" width="4" height="1" fill="#3f7fd6"/><rect x="4.2" y="12" width="4" height="1" fill="#3f7fd6"/></svg></div>
<span class="t " style="left:128.5px;top:264.03px;font-size:12px;letter-spacing:-0.059px;color:#000;">ucs-test.local</span>
<div class="i" style="left:93px;top:285px"><svg width="6" height="10" viewBox="0 0 6 10"><path d="M0.9 1.2L5 5.2L0.9 9.2" stroke="#a0a0a0" stroke-width="1.6" fill="none"/></svg></div>
<div class="i" style="left:107px;top:282px"><svg width="15" height="15" viewBox="0 0 15 15">
<path d="M0.5 3H7.2L8.6 0.8H13.6V12.2H0.5Z" fill="url(#gz)" stroke="#d3ac52" stroke-width="0.9" stroke-linejoin="round"/>
<path d="M0.9 3.9H7.6L8.8 3.1H13.2" fill="none" stroke="#e3c06a" stroke-width="0.7"/><rect x="9.6" y="1.4" width="3" height="1" fill="#6fa6e6"/>
<path d="M2.8 5.6H7.4L9.6 7.8V14.5H2.8Z" fill="#fff" stroke="#9a9a9a" stroke-width="0.9"/><path d="M7.4 5.6V7.8H9.6" fill="#e6e6e6" stroke="#9a9a9a" stroke-width="0.7"/>
<rect x="4.2" y="8" width="2.6" height="1" fill="#3f7fd6"/><rect x="4.2" y="10" width="4" height="1" fill="#3f7fd6"/><rect x="4.2" y="12" width="4" height="1" fill="#3f7fd6"/></svg></div>
<span class="t " style="left:128.5px;top:282.03px;font-size:12px;letter-spacing:-0.162px;color:#000;">_msdcs.ucs-test.local</span>
<div class="i" style="left:74px;top:303px"><svg width="6" height="10" viewBox="0 0 6 10"><path d="M0.9 1.2L5 5.2L0.9 9.2" stroke="#a0a0a0" stroke-width="1.6" fill="none"/></svg></div>
<div class="i" style="left:88px;top:300px"><svg width="15" height="13" viewBox="0 0 15 13">
<path d="M0.5 2.8H7.2L8.6 0.6H13.6V12.4H0.5Z" fill="url(#gfo)" stroke="#d9b45c" stroke-width="0.9" stroke-linejoin="round"/>
<path d="M0.9 3.7H7.6L8.8 2.9H13.2" fill="none" stroke="#e3c06a" stroke-width="0.7"/><rect x="9.6" y="1.2" width="3" height="1" fill="#6fa6e6"/><path d="M0.9 12.4H13.6" stroke="#c39a40" stroke-width="0.9"/></svg></div>
<span class="t " style="left:109.4px;top:300.03px;font-size:12px;letter-spacing:-0.245px;color:#000;">Reverse-Lookupzonen</span>
<div class="i" style="left:74px;top:321px"><svg width="6" height="10" viewBox="0 0 6 10"><path d="M0.9 1.2L5 5.2L0.9 9.2" stroke="#a0a0a0" stroke-width="1.6" fill="none"/></svg></div>
<div class="i" style="left:88px;top:318px"><svg width="15" height="13" viewBox="0 0 15 13">
<path d="M0.5 2.8H7.2L8.6 0.6H13.6V12.4H0.5Z" fill="url(#gfo)" stroke="#d9b45c" stroke-width="0.9" stroke-linejoin="round"/>
<path d="M0.9 3.7H7.6L8.8 2.9H13.2" fill="none" stroke="#e3c06a" stroke-width="0.7"/><rect x="9.6" y="1.2" width="3" height="1" fill="#6fa6e6"/><path d="M0.9 12.4H13.6" stroke="#c39a40" stroke-width="0.9"/></svg></div>
<span class="t " style="left:109.4px;top:318.03px;font-size:12px;letter-spacing:-0.032px;color:#000;">Bedingte Weiterleitungen</span>
<div class="i" style="left:73px;top:335px"><svg width="8" height="16" viewBox="0 0 8 16">
<rect x="0.3" y="0.3" width="7.4" height="15.3" fill="url(#gs)" stroke="#8e9399" stroke-width="0.6"/>
<rect x="1.4" y="1.1" width="5.2" height="1" fill="#33373c"/><rect x="1.1" y="2.7" width="5.8" height="1.6" fill="#f6f7f8"/><rect x="1.1" y="5.2" width="5.8" height="1.6" fill="#e6e8ea"/>
<rect x="5.2" y="12.8" width="1.9" height="1.9" fill="#86e21e"/></svg></div>
<span class="t " style="left:90.5px;top:336.03px;font-size:12px;letter-spacing:-0.453px;color:#000;">dc2</span>
<div class="abs" style="left:569px;top:189px;width:1px;height:24px;background:#e5e5e5"></div>
<div class="abs" style="left:719px;top:189px;width:1px;height:24px;background:#e5e5e5"></div>
<div class="abs" style="left:1021px;top:189px;width:1px;height:24px;background:#e5e5e5"></div>
<div class="abs" style="left:1171px;top:189px;width:1px;height:24px;background:#e5e5e5"></div>
<span class="t " style="left:317.8px;top:195.03px;font-size:12px;letter-spacing:-0.104px;color:#000;">Name</span>
<span class="t " style="left:576.6px;top:195.03px;font-size:12px;letter-spacing:-0.348px;color:#000;">Typ</span>
<span class="t " style="left:726.2px;top:195.03px;font-size:12px;letter-spacing:-0.286px;color:#000;">Daten</span>
<span class="t " style="left:1028.4px;top:195.03px;font-size:12px;letter-spacing:-0.021px;color:#000;">Zeitstempel</span>
<div class="i" style="left:315px;top:215px"><svg width="16" height="16" viewBox="0 0 16 16">
<rect x="0" y="0" width="16" height="16" fill="#0c0c10"/>
<rect x="1.2" y="1.6" width="13.6" height="13.6" fill="#fff"/>
<rect x="13.6" y="1.6" width="1.4" height="13.6" fill="#39478f"/><rect x="1.2" y="1.6" width="13.6" height="0.8" fill="#39478f"/><rect x="1.2" y="14.4" width="12.4" height="0.9" fill="#b9b9c2"/>
<g fill="#7f9fc8"><rect x="4" y="4.2" width="9" height="0.9"/><rect x="4" y="6.2" width="9" height="0.9"/><rect x="4" y="8.2" width="9" height="0.9"/><rect x="4" y="10.2" width="9" height="0.9"/><rect x="4" y="12.2" width="9" height="0.9"/></g>
<g fill="#6a6a6a"><rect x="1.4" y="2.6" width="2" height="1.2" rx="0.6"/><rect x="1.4" y="4.6" width="2" height="1.2" rx="0.6"/><rect x="1.4" y="6.6" width="2" height="1.2" rx="0.6"/><rect x="1.4" y="8.6" width="2" height="1.2" rx="0.6"/><rect x="1.4" y="10.6" width="2" height="1.2" rx="0.6"/><rect x="1.4" y="12.6" width="2" height="1.2" rx="0.6"/></g></svg></div>
<span class="t " style="left:333.3px;top:217.03px;font-size:12px;letter-spacing:0.052px;color:#000;">(identisch mit übergeordnetem Ordner)</span>
<span class="t " style="left:576.6px;top:217.03px;font-size:12px;letter-spacing:-0.092px;color:#000;">Autoritätsursprung (SOA)</span>
<span class="t " style="left:726.2px;top:217.03px;font-size:12px;letter-spacing:-0.046px;color:#000;">[5], dc1.ucs-test.local., hostmaster.ucs-test.local.</span>
<span class="t " style="left:1028.4px;top:217.03px;font-size:12px;letter-spacing:-0.595px;color:#000;">17.04.2018 17:00:00</span>
<div class="i" style="left:315px;top:234px"><svg width="16" height="16" viewBox="0 0 16 16">
<rect x="0" y="0" width="16" height="16" fill="#0c0c10"/>
<rect x="1.2" y="1.6" width="13.6" height="13.6" fill="#fff"/>
<rect x="13.6" y="1.6" width="1.4" height="13.6" fill="#39478f"/><rect x="1.2" y="1.6" width="13.6" height="0.8" fill="#39478f"/><rect x="1.2" y="14.4" width="12.4" height="0.9" fill="#b9b9c2"/>
<g fill="#7f9fc8"><rect x="4" y="4.2" width="9" height="0.9"/><rect x="4" y="6.2" width="9" height="0.9"/><rect x="4" y="8.2" width="9" height="0.9"/><rect x="4" y="10.2" width="9" height="0.9"/><rect x="4" y="12.2" width="9" height="0.9"/></g>
<g fill="#6a6a6a"><rect x="1.4" y="2.6" width="2" height="1.2" rx="0.6"/><rect x="1.4" y="4.6" width="2" height="1.2" rx="0.6"/><rect x="1.4" y="6.6" width="2" height="1.2" rx="0.6"/><rect x="1.4" y="8.6" width="2" height="1.2" rx="0.6"/><rect x="1.4" y="10.6" width="2" height="1.2" rx="0.6"/><rect x="1.4" y="12.6" width="2" height="1.2" rx="0.6"/></g></svg></div>
<span class="t " style="left:333.3px;top:236.03px;font-size:12px;letter-spacing:0.052px;color:#000;">(identisch mit übergeordnetem Ordner)</span>
<span class="t " style="left:576.6px;top:236.03px;font-size:12px;letter-spacing:-0.327px;color:#000;">Namenserver (NS)</span>
<span class="t " style="left:726.2px;top:236.03px;font-size:12px;letter-spacing:-0.044px;color:#000;">isilonsc.ucs-test.local.</span>
<span class="t " style="left:1028.4px;top:236.03px;font-size:12px;letter-spacing:-0.595px;color:#000;">17.04.2018 17:00:00</span>
<div class="i" style="left:315px;top:253px"><svg width="16" height="16" viewBox="0 0 16 16">
<rect x="0" y="0" width="16" height="16" fill="#0c0c10"/>
<rect x="1.2" y="1.6" width="13.6" height="13.6" fill="#fff"/>
<rect x="13.6" y="1.6" width="1.4" height="13.6" fill="#39478f"/><rect x="1.2" y="1.6" width="13.6" height="0.8" fill="#39478f"/><rect x="1.2" y="14.4" width="12.4" height="0.9" fill="#b9b9c2"/>
<g fill="#7f9fc8"><rect x="4" y="4.2" width="9" height="0.9"/><rect x="4" y="6.2" width="9" height="0.9"/><rect x="4" y="8.2" width="9" height="0.9"/><rect x="4" y="10.2" width="9" height="0.9"/><rect x="4" y="12.2" width="9" height="0.9"/></g>
<g fill="#6a6a6a"><rect x="1.4" y="2.6" width="2" height="1.2" rx="0.6"/><rect x="1.4" y="4.6" width="2" height="1.2" rx="0.6"/><rect x="1.4" y="6.6" width="2" height="1.2" rx="0.6"/><rect x="1.4" y="8.6" width="2" height="1.2" rx="0.6"/><rect x="1.4" y="10.6" width="2" height="1.2" rx="0.6"/><rect x="1.4" y="12.6" width="2" height="1.2" rx="0.6"/></g></svg></div>
<span class="t " style="left:333.3px;top:255.03px;font-size:12px;letter-spacing:-0.107px;color:#000;">isilonsc</span>
<span class="t " style="left:576.6px;top:255.03px;font-size:12px;letter-spacing:-0.127px;color:#000;">Host (A)</span>
<span class="t " style="left:726.2px;top:255.03px;font-size:12px;letter-spacing:-0.600px;color:#000;">192.168.182.40</span>
<span class="t " style="left:1028.4px;top:255.03px;font-size:12px;letter-spacing:-0.595px;color:#000;">17.04.2018 17:00:00</span>
</body></html>
